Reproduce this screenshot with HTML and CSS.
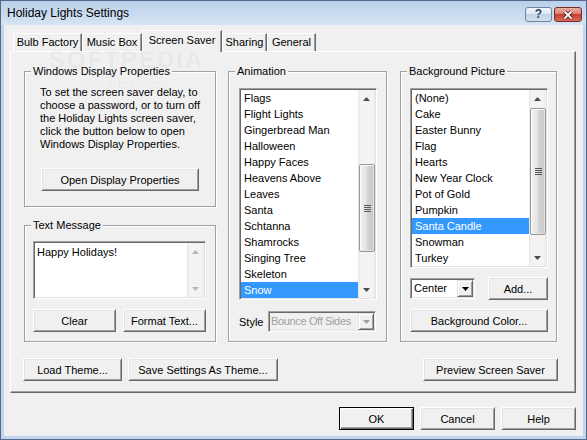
FILE: index.html
```html
<!DOCTYPE html>
<html>
<head>
<meta charset="utf-8">
<title>Holiday Lights Settings</title>
<link rel="stylesheet" href="styles.css">
</head>
<body>
<div class="window">
  <div class="titlebar">
    <span class="title">Holiday Lights Settings</span>
    <div class="caps">
      <span class="cap help">?</span>
      <span class="cap close"><svg width="14" height="10" viewBox="0 0 14 10"><path d="M3.5 1.5L10.5 8.5M10.5 1.5L3.5 8.5" stroke="#4a1410" stroke-width="3.6"/><path d="M3.5 1.5L10.5 8.5M10.5 1.5L3.5 8.5" stroke="#fff" stroke-width="1.8"/></svg></span>
    </div>
  </div>
  <div class="client">
    <div class="tabs">
      <div class="tab t1">Bulb Factory</div>
      <div class="tab t2">Music Box</div>
      <div class="tab t3 sel">Screen Saver</div>
      <div class="tab t4">Sharing</div>
      <div class="tab t5">General</div>
    </div>
    <div class="panel">
      <div class="cols">
        <div class="col-left">
          <div class="group g-wdp">
            <span class="legend">Windows Display Properties</span>
            <p class="info">To set the screen saver delay, to<br>choose a password, or to turn off<br>the Holiday Lights screen saver,<br>click the button below to open<br>Windows Display Properties.</p>
            <div class="btn b-odp">Open Display Properties</div>
          </div>
          <div class="group g-msg">
            <span class="legend">Text Message</span>
            <div class="textbox sunken">
              <div class="tb-text">Happy Holidays!</div>
              <div class="vscroll">
                <div class="sb-arrow"><svg width="7" height="4" viewBox="0 0 7 4"><path d="M3.5 0L7 4H0z" fill="#b5b5b5"/></svg></div>
                <div class="sb-track"></div>
                <div class="sb-arrow"><svg width="7" height="4" viewBox="0 0 7 4"><path d="M0 0H7L3.5 4z" fill="#b5b5b5"/></svg></div>
              </div>
            </div>
            <div class="btn-row">
              <div class="btn b-clear">Clear</div>
              <div class="btn b-fmt">Format Text...</div>
            </div>
          </div>
        </div>
        <div class="group g-anim">
          <span class="legend">Animation</span>
          <div class="listbox sunken lb-anim">
            <ul class="items">
              <li>Flags</li>
              <li>Flight Lights</li>
              <li>Gingerbread Man</li>
              <li>Halloween</li>
              <li>Happy Faces</li>
              <li>Heavens Above</li>
              <li>Leaves</li>
              <li>Santa</li>
              <li>Schtanna</li>
              <li>Shamrocks</li>
              <li>Singing Tree</li>
              <li>Skeleton</li>
              <li class="selected">Snow</li>
            </ul>
            <div class="vscroll">
              <div class="sb-arrow"><svg width="7" height="4" viewBox="0 0 7 4"><path d="M3.5 0L7 4H0z" fill="#4a4a4a"/></svg></div>
              <div class="sb-track">
                <div class="thumb th-anim"><svg width="7" height="7" viewBox="0 0 7 7"><path d="M0 .5H7M0 2.5H7M0 4.5H7M0 6.5H7" stroke="#5a5a5a" stroke-width="1"/></svg></div>
              </div>
              <div class="sb-arrow"><svg width="7" height="4" viewBox="0 0 7 4"><path d="M0 0H7L3.5 4z" fill="#4a4a4a"/></svg></div>
            </div>
          </div>
          <div class="style-row">
            <span class="style-label">Style</span>
            <div class="combo sunken disabled c-style">
              <span class="cb-text tight">Bounce Off Sides</span>
              <span class="cb-btn"><svg width="7" height="4" viewBox="0 0 7 4"><path d="M0 0H7L3.5 4z" fill="#a0a0a0"/></svg></span>
            </div>
          </div>
        </div>
        <div class="group g-bg">
          <span class="legend">Background Picture</span>
          <div class="listbox sunken lb-bg">
            <ul class="items">
              <li>(None)</li>
              <li>Cake</li>
              <li>Easter Bunny</li>
              <li>Flag</li>
              <li>Hearts</li>
              <li>New Year Clock</li>
              <li>Pot of Gold</li>
              <li>Pumpkin</li>
              <li class="selected">Santa Candle</li>
              <li>Snowman</li>
              <li>Turkey</li>
            </ul>
            <div class="vscroll">
              <div class="sb-arrow"><svg width="7" height="4" viewBox="0 0 7 4"><path d="M3.5 0L7 4H0z" fill="#4a4a4a"/></svg></div>
              <div class="sb-track">
                <div class="thumb th-bg"><svg width="7" height="7" viewBox="0 0 7 7"><path d="M0 .5H7M0 2.5H7M0 4.5H7M0 6.5H7" stroke="#5a5a5a" stroke-width="1"/></svg></div>
              </div>
              <div class="sb-arrow"><svg width="7" height="4" viewBox="0 0 7 4"><path d="M0 0H7L3.5 4z" fill="#4a4a4a"/></svg></div>
            </div>
          </div>
          <div class="pos-row">
            <div class="combo sunken c-center">
              <span class="cb-text">Center</span>
              <span class="cb-btn"><svg width="7" height="4" viewBox="0 0 7 4"><path d="M0 0H7L3.5 4z" fill="#000"/></svg></span>
            </div>
            <div class="btn b-add">Add...</div>
          </div>
          <div class="btn b-bgc">Background Color...</div>
        </div>
      </div>
      <div class="bottom-row">
        <div class="btn b-load">Load Theme...</div>
        <div class="btn b-save">Save Settings As Theme...</div>
        <div class="btn b-prev">Preview Screen Saver</div>
      </div>
    </div>
    <div class="dlg-btns">
      <div class="btn dlg default">OK</div>
      <div class="btn dlg">Cancel</div>
      <div class="btn dlg">Help</div>
    </div>
  </div>
  <div class="watermark"><span class="wm-big">SOFTPEDIA</span><span class="wm-small">www.softpedia.com</span></div>
</div>
</body>
</html>
```

FILE: styles.css
```css
* { box-sizing: border-box; }

body {
  margin: 0;
  font: 11px "Liberation Sans", Arial, sans-serif;
  color: #000;
  background: #fff;
}

.window {
  position: relative;
  width: 587px;
  height: 440px;
  border: 1px solid #51698b;
  background: linear-gradient(#bad0ea, #d6e4f4 24px, #c3d6ed 24px);
  padding: 0 3px 3px 3px;
  display: flex;
  flex-direction: column;
}

.titlebar {
  height: 24px;
  display: flex;
  justify-content: space-between;
  align-items: flex-start;
}

.title {
  font-size: 12px;
  line-height: 14px;
  padding: 5px 0 0 3px;
}

.caps {
  display: flex;
  gap: 2px;
  margin-top: 6px;
  margin-right: 1px;
}

.cap {
  width: 27px;
  height: 15px;
  border-radius: 3px;
  display: flex;
  align-items: center;
  justify-content: center;
}

.help {
  border: 1px solid #6f839f;
  background: linear-gradient(#f2f6fb, #dbe5f1 50%, #c3d3e7 50%, #d3e0ee);
  color: #34425a;
  font-size: 12px;
  font-weight: bold;
  line-height: 13px;
}

.close {
  width: 28px;
  border: 1px solid #7b2a22;
  background: linear-gradient(#eab0a6, #d9796b 50%, #c5402f 50%, #d46d5e);
}

.client {
  flex: 1;
  background: #f0f0f0;
  padding: 5px 7px 0 6px;
  display: flex;
  flex-direction: column;
}

/* Tabs */
.tabs {
  position: relative;
  z-index: 1;
  display: flex;
  align-items: flex-end;
  height: 21px;
  padding-left: 3px;
}

.tab {
  height: 18px;
  border: 1px solid;
  border-bottom: 0;
  border-color: #fff #696969 transparent #fff;
  box-shadow: inset -1px 0 #a0a0a0;
  background: #f0f0f0;
  text-align: center;
  line-height: 17px;
  white-space: nowrap;
}

.t1 { width: 69px; }
.t2 { width: 60px; }
.t3 { width: 80px; }
.t4 { width: 45px; }
.t5 { width: 49px; }

.tab.sel {
  height: 22px;
  margin-bottom: -1px;
  line-height: 18px;
}

/* Panel */
.panel {
  height: 342px;
  border: 1px solid;
  border-color: #fff #696969 #696969 #fff;
  box-shadow: inset -1px -1px #a0a0a0;
  padding: 19px 0 0 13px;
}

.cols {
  display: flex;
  height: 271px;
}

.col-left {
  width: 192px;
  margin-right: 12px;
  display: flex;
  flex-direction: column;
  gap: 18px;
}

.group {
  position: relative;
  border: 1px solid #a0a0a0;
  box-shadow: inset 1px 1px #fff, 1px 1px #fff;
  display: flex;
  flex-direction: column;
}

.legend {
  position: absolute;
  top: -7px;
  left: 6px;
  padding: 0 2px;
  line-height: 13px;
  background: #f0f0f0;
  white-space: nowrap;
}

.g-wdp {
  height: 136px;
  padding: 14px 0 0 15px;
}

.info {
  margin: 0;
  line-height: 13px;
  white-space: nowrap;
}

.b-odp {
  width: 158px;
  margin: 17px 0 0 1px;
}

.g-msg {
  height: 117px;
  padding: 15px 0 0 8px;
}

.textbox {
  width: 173px;
  height: 58px;
  display: flex;
  padding: 1px;
  background: #fff;
}

.tb-text {
  flex: 1;
  padding: 3px 0 0 2px;
  line-height: 13px;
}

.btn-row {
  display: flex;
  gap: 7px;
  margin-top: 10px;
}

.b-clear, .b-fmt { width: 83px; }

.g-anim {
  width: 159px;
  margin-right: 13px;
  padding: 16px 0 0 10px;
}

.g-bg {
  width: 157px;
  padding: 16px 0 0 9px;
}

/* Sunken controls */
.sunken {
  border: 1px solid;
  border-color: #a0a0a0 #fff #fff #a0a0a0;
  box-shadow: inset 1px 1px #696969, inset -1px -1px #e3e3e3;
}

.listbox {
  width: 138px;
  display: flex;
  padding: 1px;
  background: #fff;
}

.lb-anim { height: 212px; }
.lb-bg { height: 180px; }

.items {
  list-style: none;
  margin: 0;
  padding: 0;
  flex: 1;
}

.items li {
  height: 16px;
  line-height: 16px;
  padding-left: 3px;
  white-space: nowrap;
}

.items li.selected {
  background: #3399ff;
  color: #fff;
}

/* Scrollbars */
.vscroll {
  width: 17px;
  display: flex;
  flex-direction: column;
  background: linear-gradient(90deg, #e4e4e4 0, #f3f3f3 2px, #f3f3f3 15px, #eaeaea 17px);
}

.sb-arrow {
  height: 17px;
  display: flex;
  align-items: center;
  justify-content: center;
  flex: none;
}

.sb-track {
  flex: 1;
  display: flex;
  flex-direction: column;
}

.thumb {
  width: 16px;
  margin-left: 1px;
  border: 1px solid #999;
  border-radius: 2px;
  box-shadow: inset 1px 1px #fbfbfb, inset -1px -1px #e4e4e4;
  background: linear-gradient(90deg, #f2f2f2, #e4e4e4 45%, #d2d2d2 55%, #c8c8c8);
  display: flex;
  align-items: center;
  justify-content: center;
}

.th-anim { margin-top: 57px; height: 88px; }
.th-bg { margin-top: 1px; height: 127px; }

/* Combos */
.style-row {
  display: flex;
  align-items: center;
  margin-top: 11px;
}

.style-label { width: 29px; }

.combo {
  height: 21px;
  display: flex;
  padding: 1px;
  background: #fff;
}

.combo.disabled { background: #f0f0f0; color: #a0a0a0; }

.c-style { width: 108px; }
.c-center { width: 65px; }

.cb-text {
  flex: 1;
  padding-left: 2px;
  line-height: 17px;
  white-space: nowrap;
  overflow: hidden;
}

.cb-text.tight {
  letter-spacing: -0.35px;
  padding-left: 1px;
}

.cb-btn {
  width: 16px;
  height: 17px;
  flex: none;
  background: #f0f0f0;
  border: 1px solid;
  border-color: #e3e3e3 #696969 #696969 #e3e3e3;
  box-shadow: inset 1px 1px #fff, inset -1px -1px #a0a0a0;
  display: flex;
  align-items: center;
  justify-content: center;
}

.pos-row {
  width: 138px;
  height: 23px;
  display: flex;
  align-items: center;
  justify-content: space-between;
  margin-top: 9px;
}

.b-add { width: 60px; }

.b-bgc {
  width: 138px;
  margin-top: 9px;
}

/* Buttons */
.btn {
  height: 23px;
  flex: none;
  background: #f0f0f0;
  border: 1px solid;
  border-color: #fff #696969 #696969 #fff;
  box-shadow: inset 1px 1px #e3e3e3, inset -1px -1px #a0a0a0;
  display: flex;
  align-items: center;
  justify-content: center;
  white-space: nowrap;
}

.btn.default {
  border-color: #000;
  box-shadow: inset 1px 1px #fff, inset -1px -1px #696969, inset -2px -2px #a0a0a0;
}

.bottom-row {
  display: flex;
  margin: 16px 17px 0 -1px;
}

.b-load { width: 99px; margin-right: 6px; }
.b-save { width: 150px; }
.b-prev { width: 135px; margin-left: auto; }

.dlg-btns {
  display: flex;
  justify-content: flex-end;
  gap: 6px;
  margin-top: 14px;
}

.dlg { width: 75px; }

/* Watermark overlay */
.watermark {
  position: absolute;
  left: 48px;
  top: 47px;
  display: flex;
  flex-direction: column;
  align-items: center;
  pointer-events: none;
  color: rgba(0, 0, 0, 0.045);
}

.wm-big {
  font-size: 24px;
  font-weight: bold;
  letter-spacing: 2px;
  line-height: 24px;
}

.wm-small {
  font-size: 10px;
  line-height: 12px;
  margin-top: 7px;
}
```
